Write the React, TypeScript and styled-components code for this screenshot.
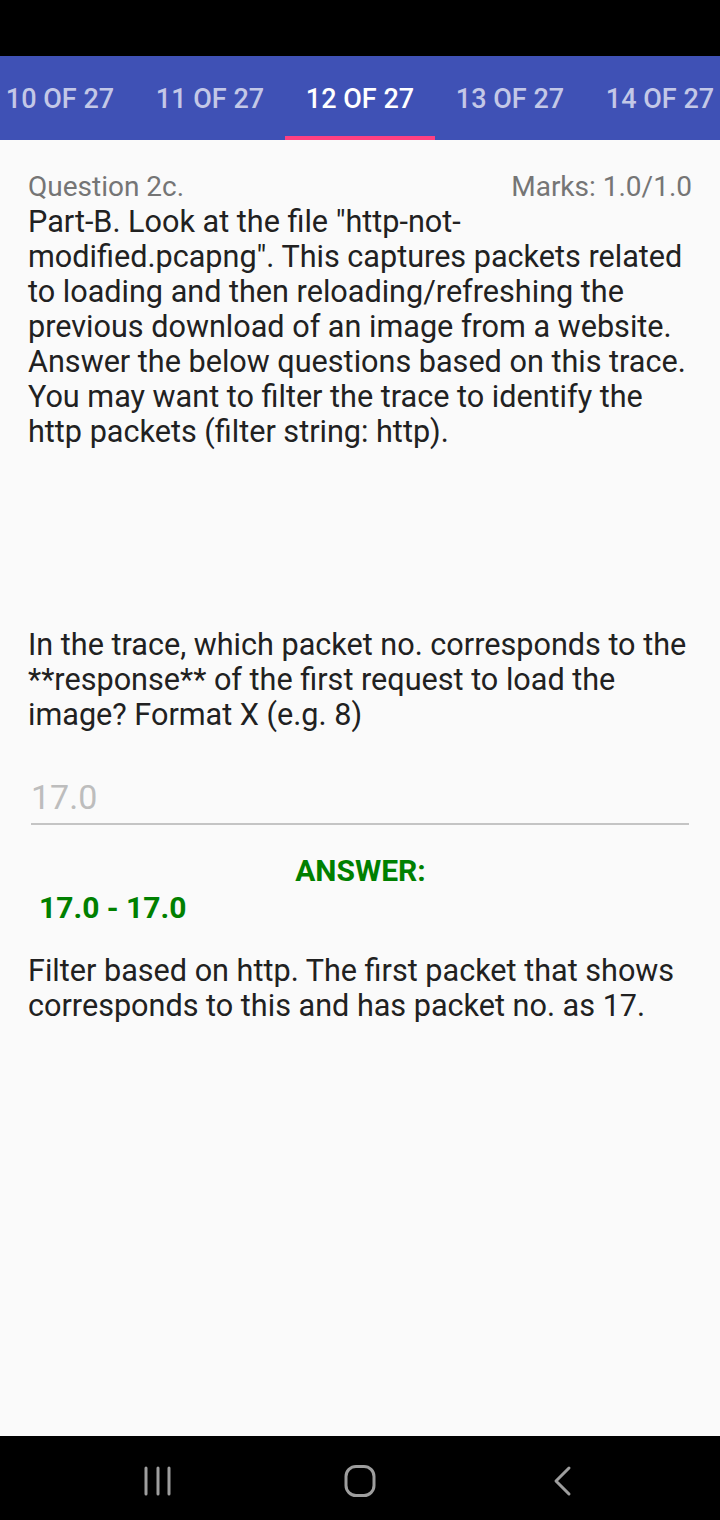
import React from "react";
import styled, { createGlobalStyle } from "styled-components";

const Global = createGlobalStyle`
  html, body { margin: 0; padding: 0; background: #fafafa; }
  body { font-family: Roboto, "Noto Sans", sans-serif; }
  * { box-sizing: border-box; }
`;

const Screen = styled.div`
  width: 720px;
  height: 1520px;
  display: flex;
  flex-direction: column;
  background: #fafafa;
  overflow: hidden;
`;

const StatusBar = styled.div`
  height: 56px;
  background: #000;
  flex-shrink: 0;
`;

const TabBar = styled.div`
  height: 84px;
  background: #3f51b5;
  display: flex;
  flex-shrink: 0;
  overflow: hidden;
`;

const TabStrip = styled.div`
  display: flex;
  margin-left: -15px;
`;

const Tab = styled.div<{ $active?: boolean }>`
  width: 150px;
  height: 84px;
  flex-shrink: 0;
  display: flex;
  align-items: center;
  justify-content: center;
  font-size: 27px;
  font-weight: 500;
  color: ${(p) => (p.$active ? "#ffffff" : "rgba(255,255,255,0.7)")};
  border-bottom: 4px solid ${(p) => (p.$active ? "#ff4081" : "transparent")};
  padding-top: 6px;
  white-space: nowrap;
`;

const Content = styled.div`
  flex: 1;
  padding: 30px 27px 0 28px;
  display: flex;
  flex-direction: column;
`;

const HeaderRow = styled.div`
  display: flex;
  justify-content: space-between;
  align-items: center;
  height: 32px;
  font-size: 28px;
  color: #757575;
  padding-right: 1px;
`;

const Paragraph = styled.p<{ $top: number }>`
  margin: ${(p) => p.$top}px 0 0 0;
  font-size: 30.6px;
  line-height: 35px;
  color: #212121;
`;

const InputField = styled.div`
  margin: 45px 4px 0 3px;
  height: 48px;
  padding-bottom: 6px;
  border-bottom: 2px solid #c4c4c4;
  font-size: 34px;
  line-height: 40px;
  color: #bdbdbd;
  display: flex;
  align-items: flex-start;
`;

const AnswerLabel = styled.div`
  margin-top: 28px;
  text-align: center;
  font-size: 30px;
  font-weight: 700;
  line-height: 35px;
  color: #008000;
`;

const AnswerRange = styled.div`
  margin-top: 2px;
  padding-left: 11px;
  font-size: 30px;
  font-weight: 700;
  line-height: 35px;
  color: #008000;
`;

const NavBar = styled.div`
  height: 84px;
  background: #000;
  flex-shrink: 0;
  display: flex;
  align-items: center;
  justify-content: center;
  gap: 171px;
  padding-top: 6px;
`;

const NavIcon = styled.svg`
  width: 32px;
  height: 32px;
  display: block;
`;

export default function App() {
  const tabs = ["10 OF 27", "11 OF 27", "12 OF 27", "13 OF 27", "14 OF 27"];
  return (
    <Screen>
      <Global />
      <StatusBar />
      <TabBar>
        <TabStrip>
          {tabs.map((t) => (
            <Tab key={t} $active={t === "12 OF 27"}>
              {t}
            </Tab>
          ))}
        </TabStrip>
      </TabBar>
      <Content>
        <HeaderRow>
          <span>Question 2c.</span>
          <span>Marks: 1.0/1.0</span>
        </HeaderRow>
        <Paragraph $top={2}>
          Part-B. Look at the file "http-not-modified.pcapng". This captures
          packets related to loading and then reloading/refreshing the previous
          download of an image from a website. Answer the below questions based
          on this trace. You may want to filter the trace to identify the http
          packets (filter string: http).
        </Paragraph>
        <Paragraph $top={178}>
          In the trace, which packet no. corresponds to the **response** of the
          first request to load the image? Format X (e.g. 8)
        </Paragraph>
        <InputField>17.0</InputField>
        <AnswerLabel>ANSWER:</AnswerLabel>
        <AnswerRange>17.0 - 17.0</AnswerRange>
        <Paragraph $top={28}>
          Filter based on http. The first packet that shows corresponds to this
          and has packet no. as 17.
        </Paragraph>
      </Content>
      <NavBar>
        <NavIcon viewBox="0 0 32 32">
          <g stroke="#9e9e9e" strokeWidth="3" strokeLinecap="round">
            <line x1="5" y1="3" x2="5" y2="29" />
            <line x1="17" y1="3" x2="17" y2="29" />
            <line x1="28" y1="3" x2="28" y2="29" />
          </g>
        </NavIcon>
        <NavIcon viewBox="0 0 32 32">
          <rect
            x="2"
            y="1.5"
            width="28"
            height="29"
            rx="10"
            fill="none"
            stroke="#9e9e9e"
            strokeWidth="3"
          />
        </NavIcon>
        <NavIcon viewBox="0 0 32 32">
          <polyline
            points="22,3 9,16 22,29"
            fill="none"
            stroke="#9e9e9e"
            strokeWidth="3"
            strokeLinecap="round"
            strokeLinejoin="round"
          />
        </NavIcon>
      </NavBar>
    </Screen>
  );
}
